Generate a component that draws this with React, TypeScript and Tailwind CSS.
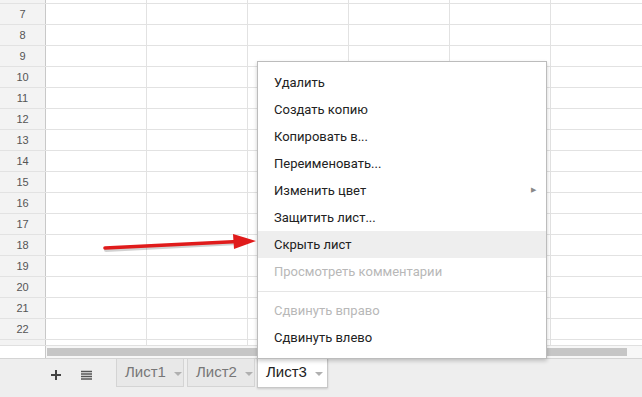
const rows = [7, 8, 9, 10, 11, 12, 13, 14, 15, 16, 17, 18, 19, 20, 21, 22]
const cols = [0, 1, 2, 3, 4, 5]

type Item = { label: string; disabled?: boolean; active?: boolean; submenu?: boolean }

const topItems: Item[] = [
  { label: 'Удалить' },
  { label: 'Создать копию' },
  { label: 'Копировать в...' },
  { label: 'Переименовать...' },
  { label: 'Изменить цвет', submenu: true },
  { label: 'Защитить лист...' },
  { label: 'Скрыть лист', active: true },
  { label: 'Просмотреть комментарии', disabled: true },
]

const bottomItems: Item[] = [
  { label: 'Сдвинуть вправо', disabled: true },
  { label: 'Сдвинуть влево' },
]

function MenuRow({ item }: { item: Item }) {
  return (
    <div
      className={`flex h-[27px] items-center justify-between pl-[16px] pr-[10px] text-[13px] ${
        item.active ? 'bg-[#eeeeee]' : ''
      } ${item.disabled ? 'text-[#b8b8b8]' : 'text-[#222]'}`}
    >
      <span>{item.label}</span>
      {item.submenu && <span className="text-[7px] text-[#888]">▶</span>}
    </div>
  )
}

function Caret() {
  return (
    <svg width="8" height="4" viewBox="0 0 8 4" className="ml-[8px] mt-[2px]">
      <path d="M0 0h8L4 4z" fill="#b0b0b0" />
    </svg>
  )
}

function GridRow({ n }: { n?: number }) {
  return (
    <div className="flex h-[21px] shrink-0 border-b border-[#e2e2e2]">
      <div className="flex w-[46px] shrink-0 items-center justify-center border-r border-[#c8c8c8] bg-[#f3f3f3] text-[11px] text-[#555] font-['Liberation_Sans',sans-serif]">
        {n}
      </div>
      {cols.map((c) => (
        <div key={c} className="w-[101px] shrink-0 border-r border-[#e2e2e2]" />
      ))}
    </div>
  )
}

export default function App() {
  return (
    <div className="relative h-[397px] w-[642px] overflow-hidden bg-white font-['Roboto',sans-serif]">
      {/* grid */}
      <div className="flex h-[358px] flex-col">
        <div className="flex h-[4px] shrink-0 border-b border-[#e2e2e2]">
          <div className="w-[46px] shrink-0 border-r border-[#c8c8c8] bg-[#f3f3f3]" />
          {cols.map((c) => (
            <div key={c} className="w-[101px] shrink-0 border-r border-[#e2e2e2]" />
          ))}
        </div>
        {rows.map((r) => (
          <GridRow key={r} n={r} />
        ))}
        <div className="flex h-[5px] shrink-0">
          <div className="w-[46px] shrink-0 border-r border-[#c8c8c8] bg-[#f3f3f3]" />
          {cols.map((c) => (
            <div key={c} className="w-[101px] shrink-0 border-r border-[#e2e2e2]" />
          ))}
        </div>
        {/* horizontal scrollbar */}
        <div className="flex h-[13px] shrink-0 border-t border-[#e0e0e0] bg-[#f7f7f7]">
          <div className="w-[46px] shrink-0 border-r border-[#c8c8c8] bg-white" />
          <div className="flex flex-1 items-center pl-[1px] pr-[15px]">
            <div className="h-[8px] flex-1 bg-[#c6c6c6]" />
          </div>
        </div>
      </div>

      {/* sheet bar */}
      <div className="flex h-[39px] items-start border-t border-[#d4d4d4] bg-[#eeeeee] font-['Liberation_Sans',sans-serif]">
        <div className="flex h-[30px] items-center pl-[50px]">
          <svg width="12" height="12" viewBox="0 0 12 12" className="mt-[1px]">
            <path d="M6 1v10M1 6h10" stroke="#444" strokeWidth="2" />
          </svg>
          <svg width="11" height="10" viewBox="0 0 11 10" className="ml-[19px] mt-[1px]">
            <path d="M0 1.5h11M0 4h11M0 6.5h11M0 9h11" stroke="#555" strokeWidth="1.4" />
          </svg>
        </div>
        <div className="ml-[24px] flex h-[28px] w-[68px] items-center border border-t-0 border-[#d4d4d4] bg-[#e8e8e8] pl-[8px] text-[15px] text-[#777]">
          Лист1
          <Caret />
        </div>
        <div className="ml-[3px] flex h-[28px] w-[68px] items-center border border-t-0 border-[#d4d4d4] bg-[#e8e8e8] pl-[8px] text-[15px] text-[#777]">
          Лист2
          <Caret />
        </div>
        <div className="-mt-[2px] ml-[2px] flex h-[31px] w-[71px] items-center border border-[#c8c8c8] bg-white pl-[8px] text-[15px] text-[#222] shadow-[0_1px_2px_rgba(0,0,0,0.15)]">
          Лист3
          <Caret />
        </div>
      </div>

      {/* context menu */}
      <div className="absolute left-[257px] top-[61px] w-[290px] border border-[#bcbcbc] bg-white py-[7px] shadow-[0_2px_4px_rgba(0,0,0,0.2)]">
        {topItems.map((it) => (
          <MenuRow key={it.label} item={it} />
        ))}
        <div className="flex h-[12px] items-center">
          <div className="h-px w-full bg-[#e5e5e5]" />
        </div>
        {bottomItems.map((it) => (
          <MenuRow key={it.label} item={it} />
        ))}
      </div>

      {/* red arrow */}
      <svg className="absolute left-0 top-0" width="642" height="397" viewBox="0 0 642 397">
        <path d="M106 250 L238 243" stroke="rgba(0,0,0,0.18)" strokeWidth="4" strokeLinecap="round" />
        <path d="M105 248 L238 241.5" stroke="#e01b1b" strokeWidth="3.6" strokeLinecap="round" />
        <path d="M233 234 L256 241 L234 249 Z" fill="#e01b1b" />
      </svg>
    </div>
  )
}
